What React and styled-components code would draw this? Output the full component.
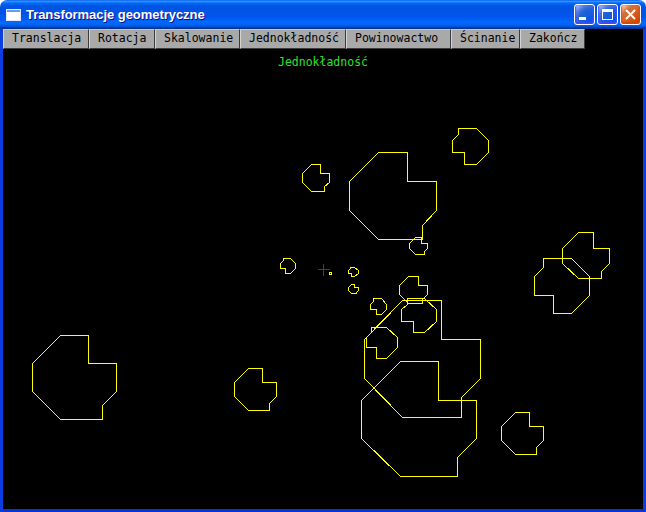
import React from 'react';
import styled, { createGlobalStyle } from 'styled-components';

const GlobalStyle = createGlobalStyle`
  html, body {
    margin: 0;
    padding: 0;
    background: #ffffff;
  }
`;

const Window = styled.div`
  width: 646px;
  height: 512px;
  display: flex;
  flex-direction: column;
  overflow: hidden;
  border-radius: 7px 7px 0 0;
`;

const TitleBar = styled.div`
  height: 29px;
  flex: none;
  display: flex;
  align-items: center;
  padding-left: 6px;
  box-sizing: border-box;
  background: linear-gradient(
    to bottom,
    #0058ee 0%,
    #3593ff 4%,
    #288eff 6%,
    #127dff 8%,
    #036ffc 10%,
    #0262ee 14%,
    #0057e5 20%,
    #0054e3 24%,
    #0055eb 56%,
    #005bf5 66%,
    #026afe 76%,
    #0062ef 86%,
    #0052d6 92%,
    #0040ab 94%,
    #003092 100%
  );
`;

const Title = styled.span`
  flex: 1;
  margin-left: 5px;
  color: #ffffff;
  font: bold 13px 'Liberation Sans', Arial, sans-serif;
  text-shadow: 1px 1px #0f1089;
  letter-spacing: -0.05px;
`;

const Controls = styled.div`
  display: flex;
  gap: 2px;
  margin-right: 5px;
`;

const CtlButton = styled.div`
  width: 21px;
  height: 21px;
  box-sizing: border-box;
  border: 1px solid #ffffff;
  border-radius: 3px;
  display: flex;
  align-items: center;
  justify-content: center;
  background: ${(p) =>
    p.$close
      ? 'radial-gradient(circle at 90% 90%, #cc4600 0%, #dc6527 55%, #cd7546 70%, #ffccb2 90%, #ffffff 100%)'
      : 'radial-gradient(circle at 90% 90%, #0054e9 0%, #2263d5 55%, #4479e4 70%, #a3bbec 90%, #ffffff 100%)'};
  box-shadow: inset 0 -1px 2px 1px ${(p) => (p.$close ? '#da4600' : '#4646ff')};
`;

const Frame = styled.div`
  flex: 1;
  display: flex;
  flex-direction: column;
  background: #000000;
  border: 3px solid #0831d9;
  border-top: none;
  border-left-color: #0a3ee0;
  border-right-color: #0a3ee0;
  border-bottom-color: #0833d6;
`;

const Toolbar = styled.div`
  display: flex;
  height: 20px;
  flex: none;
`;

const MenuButton = styled.div`
  width: ${(p) => p.$w}px;
  height: 20px;
  box-sizing: border-box;
  padding-left: 8px;
  background: #a9a9a9;
  border-top: 1px solid #c8c8c8;
  border-left: 1px solid #d4d4d4;
  border-right: 1px solid #3c3c3c;
  border-bottom: 1px solid #3c3c3c;
  color: #000000;
  font: 11.5px/16px 'DejaVu Sans Mono', 'Liberation Mono', monospace;
  white-space: nowrap;
  overflow: hidden;
`;

const Canvas = styled.div`
  flex: 1;
  position: relative;
`;

const Caption = styled.div`
  position: relative;
  z-index: 1;
  padding-top: 6px;
  text-align: center;
  color: #2ee02e;
  font: 11.5px/14px 'DejaVu Sans Mono', 'Liberation Mono', monospace;
`;

const Drawing = styled.svg`
  position: absolute;
  left: 0;
  top: 0;
  display: block;
`;

const BUTTONS = [
  ['Translacja', 86],
  ['Rotacja', 66],
  ['Skalowanie', 85],
  ['Jednokładność', 106],
  ['Powinowactwo', 105],
  ['Ścinanie', 69],
  ['Zakończ', 65],
];

// kształt bazowy: ośmiokąt z wycięciem, w jednostkach
const BASE = [
  [-1, -3], [1, -3], [1, -1], [3, -1], [3, 1],
  [2, 2], [2, 3], [-1, 3], [-3, 1], [-3, -1],
];

// x, y, skala, kierunek (1 normalnie, -1 obrót o 180)
const SHAPES = [
  [74, 377, 14, 1],
  [255, 389, 6.85, 1],
  [392.8, 195.8, 14.5, 1],
  [315.5, 177.3, 4.4, 1],
  [470.3, 146.2, 6, -1],
  [418, 245.5, 2.9, 1],
  [287.5, 265.3, 2.5, -1],
  [352.7, 271.5, 1.6, -1],
  [352.7, 288.3, 1.6, 1],
  [378.3, 306.3, 2.7, -1],
  [413, 289.7, 4.57, 1],
  [418.5, 315, 5.73, -1],
  [421.8, 358.3, 19.4, 1],
  [418.8, 418.8, 19.2, 1],
  [381.3, 342.3, 5.1, -1],
  [585.5, 255.3, 7.7, 1],
  [561.8, 285.3, 9.2, -1],
  [521.5, 432.8, 7, 1],
];

const toPoints = ([x, y, s, k]) =>
  BASE.map(([u, v]) => `${Math.round(x + k * u * s) + 0.5},${Math.round(y + k * v * s) + 0.5}`).join(' ');

const AppIcon = () => (
  <svg width='15' height='12' viewBox='0 0 15 12'>
    <rect x='0.5' y='0.5' width='14' height='11' fill='#ffffff' stroke='#dfe8f8' />
    <rect x='1' y='1' width='13' height='2' fill='#6f9be6' />
  </svg>
);

const App = () => {
  return (
    <>
      <GlobalStyle />
      <Window>
        <TitleBar>
          <AppIcon />
          <Title>Transformacje geometryczne</Title>
          <Controls>
            <CtlButton>
              <svg width='19' height='19' viewBox='0 0 19 19'>
                <rect x='4' y='12' width='7' height='3' fill='#ffffff' />
              </svg>
            </CtlButton>
            <CtlButton>
              <svg width='19' height='19' viewBox='0 0 19 19'>
                <rect x='4.5' y='4.5' width='10' height='10' fill='none' stroke='#ffffff' />
                <rect x='4' y='4' width='11' height='3' fill='#ffffff' />
              </svg>
            </CtlButton>
            <CtlButton $close>
              <svg width='19' height='19' viewBox='0 0 19 19'>
                <path d='M5 5 L14 14 M14 5 L5 14' stroke='#ffffff' strokeWidth='2' />
              </svg>
            </CtlButton>
          </Controls>
        </TitleBar>
        <Frame>
          <Toolbar>
            {BUTTONS.map(([label, w]) => (
              <MenuButton key={label} $w={w}>
                {label}
              </MenuButton>
            ))}
          </Toolbar>
          <Canvas>
            <Caption>Jednokładność</Caption>
            <Drawing width='640' height='460' viewBox='3 49 640 460' shapeRendering='crispEdges'>
              {SHAPES.map((sh, i) => (
                <polygon key={i} points={toPoints(sh)} fill='none' stroke='#ffff00' strokeWidth='1' />
              ))}
              <path d='M317.5 269.5 H329.5 M323.5 263.5 V275.5' stroke='#e00000' strokeWidth='1' />
              <rect x='329.5' y='272.5' width='2' height='2' fill='none' stroke='#ffff00' />
            </Drawing>
          </Canvas>
        </Frame>
      </Window>
    </>
  );
};

export default App;
